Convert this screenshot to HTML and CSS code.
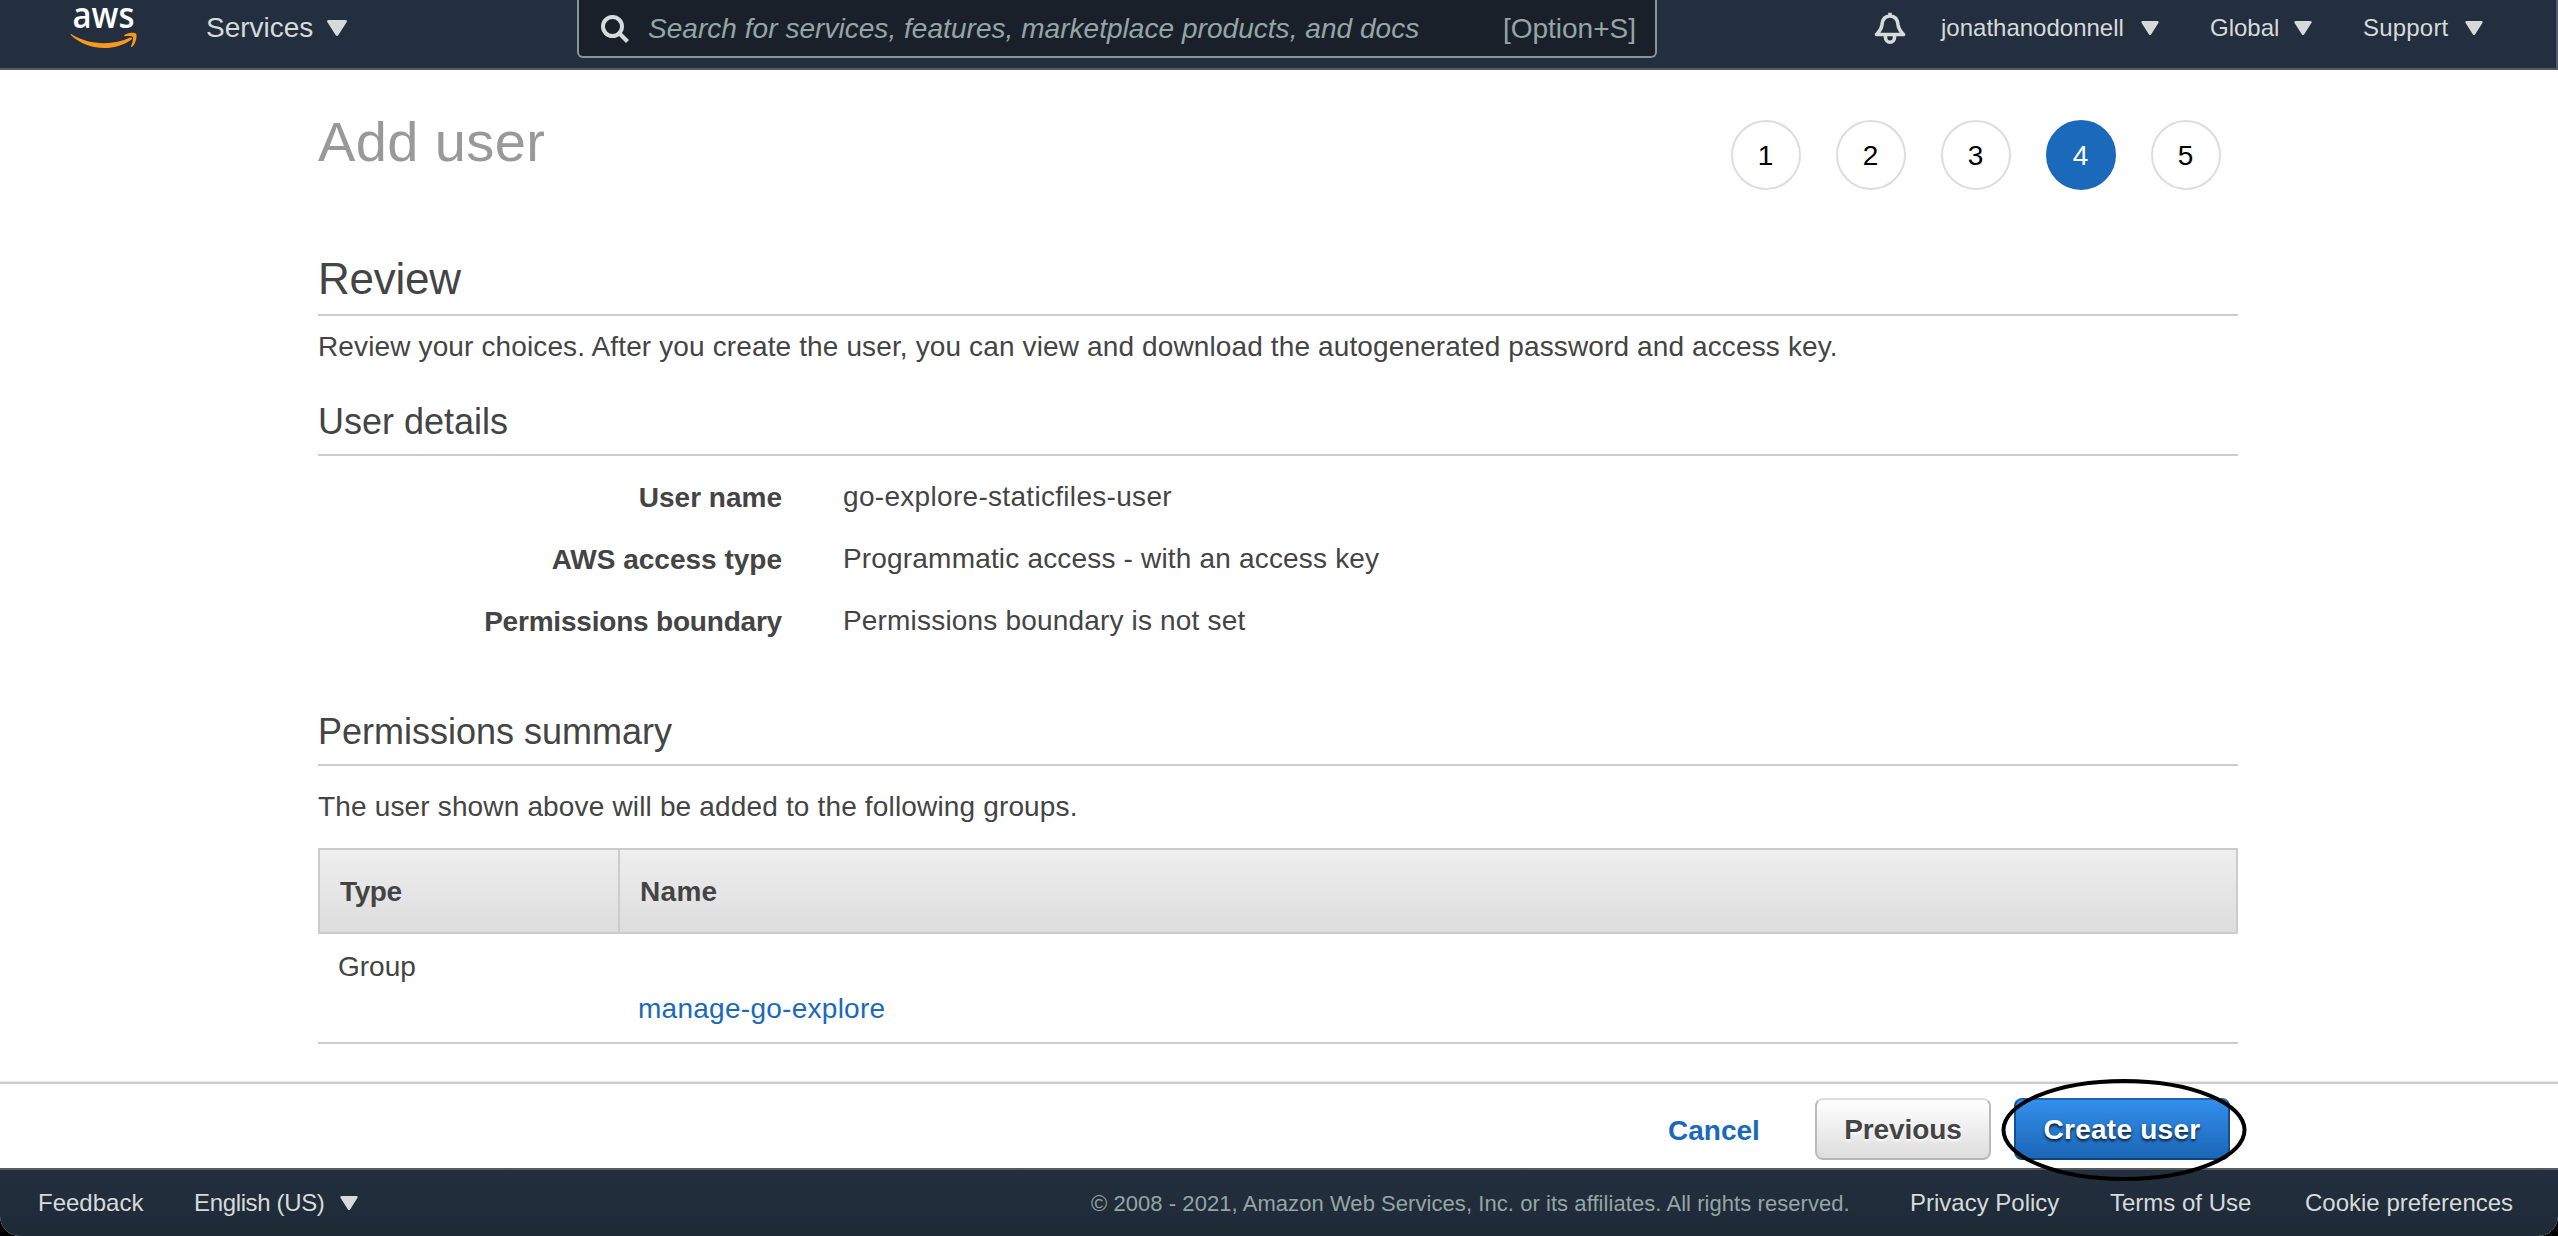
FILE: index.html
```html
<!DOCTYPE html>
<html lang="en">
<head>
<meta charset="utf-8">
<title>Add user</title>
<link rel="stylesheet" href="styles.css">
</head>
<body>
<header class="topbar">
  <svg class="logo" viewBox="0 0 70 44" role="img" aria-label="aws">
    <text class="logo-text" x="2.5" y="22" textLength="62" lengthAdjust="spacingAndGlyphs">aws</text>
    <path class="smile" d="M1.2 28C18 38.8 42 40.200 60.200 31.600C62 31 62.800 32.500 61.200 33.700C43 46.600 17 44 1 29.200C.3 28.400.6 27.600 1.200 28z"/>
    <path class="smile" d="M54.500 29C58.500 26.300 64.500 26.400 66.100 27.700C67.400 29.300 66 37.500 62.200 40.800C61.400 41.400 60.800 41 61.100 40.200C62.200 37.200 63.700 32 62.800 30.800C61.800 29.700 57.500 29.900 55 30.200C54 30.300 53.800 29.500 54.500 29z"/>
  </svg>
  <a class="services">Services<svg class="caret caret-lg" viewBox="0 0 20 16"><path d="M2 0H18Q21 0 19.400 2.500L11.400 15Q10 17 8.600 15L.6 2.500Q-1 0 2 0z"/></svg></a>
  <div class="search">
    <svg class="magnifier" viewBox="0 0 28 28"><circle cx="11.500" cy="11.500" r="9.500"/><path d="M18.500 18.500L26.500 26.500"/></svg>
    <span class="placeholder">Search for services, features, marketplace products, and docs</span>
    <span class="shortcut">[Option+S]</span>
  </div>
  <nav class="account">
    <svg class="bell" viewBox="0 0 32 32"><path d="M16 .8V4M2.500 22.500C6.500 18.500 7.500 16.500 8 12.500C8.600 6.500 11.500 4 16 4S23.400 6.500 24 12.500C24.500 16.500 25.500 18.500 29.500 22.500z"/><path d="M11.500 22.500V25.500A4.500 4.700 0 0 0 20.500 25.500V22.500"/></svg>
    <a class="menu menu-user">jonathanodonnell<svg class="caret" viewBox="0 0 20 16"><path d="M2 0H18Q21 0 19.400 2.500L11.400 15Q10 17 8.600 15L.6 2.500Q-1 0 2 0z"/></svg></a>
    <a class="menu menu-region">Global<svg class="caret" viewBox="0 0 20 16"><path d="M2 0H18Q21 0 19.400 2.500L11.400 15Q10 17 8.600 15L.6 2.500Q-1 0 2 0z"/></svg></a>
    <a class="menu menu-support">Support<svg class="caret" viewBox="0 0 20 16"><path d="M2 0H18Q21 0 19.400 2.500L11.400 15Q10 17 8.600 15L.6 2.500Q-1 0 2 0z"/></svg></a>
  </nav>
</header>
<main class="content">
  <div class="title-row">
    <h1 class="title">Add user</h1>
    <ol class="steps">
      <li class="step">1</li><li class="step">2</li><li class="step">3</li><li class="step step-active">4</li><li class="step">5</li>
    </ol>
  </div>
  <h2 class="review">Review</h2>
  <p class="intro">Review your choices. After you create the user, you can view and download the autogenerated password and access key.</p>
  <h3 class="section">User details</h3>
  <dl class="details">
    <dt>User name</dt><dd class="username">go-explore-staticfiles-user</dd>
    <dt>AWS access type</dt><dd>Programmatic access - with an access key</dd>
    <dt class="boundary">Permissions boundary</dt><dd>Permissions boundary is not set</dd>
  </dl>
  <h3 class="section">Permissions summary</h3>
  <p class="summary">The user shown above will be added to the following groups.</p>
  <div class="table">
    <div class="row head"><div class="cell type">Type</div><div class="cell">Name</div></div>
    <div class="row body"><div class="cell">Group</div><div class="cell cell-link"><a>manage-go-explore</a></div></div>
  </div>
</main>
<div class="actions">
  <a class="cancel">Cancel</a>
  <button class="btn btn-plain">Previous</button>
  <div class="primary-wrap">
    <button class="btn btn-primary">Create user</button>
    <svg class="ring" viewBox="0 0 246 104"><ellipse cx="123" cy="52" rx="120.500" ry="49"/></svg>
  </div>
</div>
<footer class="footer">
  <a class="feedback">Feedback</a>
  <a class="language"><span class="language-name">English (US)</span><svg class="caret" viewBox="0 0 20 16"><path d="M2 0H18Q21 0 19.400 2.500L11.400 15Q10 17 8.600 15L.6 2.500Q-1 0 2 0z"/></svg></a>
  <span class="copyright">© 2008 - 2021, Amazon Web Services, Inc. or its affiliates. All rights reserved.</span>
  <a class="privacy">Privacy Policy</a>
  <a class="terms">Terms of Use</a>
  <a class="cookies">Cookie preferences</a>
</footer>
</body>
</html>
```
FILE: styles.css
```css
* { box-sizing: border-box; }
html { background: #000; }
body {
  margin: 0;
  width: 2558px;
  height: 1236px;
  display: flex;
  flex-direction: column;
  overflow: hidden;
  background: #fff;
  border-radius: 0 0 20px 20px;
  font: 28px/40px "Liberation Sans", Arial, sans-serif;
  color: #444;
}
h1, h2, h3, p, ol, dl, dd { margin: 0; padding: 0; font-weight: normal; }
svg { display: block; flex: none; }
a { color: #1b69ba; }

.topbar {
  height: 70px;
  flex: none;
  display: flex;
  align-items: flex-start;
  padding-left: 70px;
  background: #232f3e;
  border-bottom: 2px solid #545b64;
  border-right: 2px solid #545b64;
  color: #d5dbdb;
}
.topbar a, .footer a { color: #d5dbdb; }
.logo { width: 70px; height: 44px; margin: 6px 66px 0 0; overflow: visible; }
.logo-text { font: 600 36px "Open Sans", sans-serif; fill: #fff; }
.smile { fill: #f8991d; }
.services { display: flex; align-items: center; gap: 14px; width: 371px; margin-top: 8px; }
.caret { width: 18px; height: 14px; fill: #d5dbdb; }
.caret-lg { width: 20px; height: 16px; }
.search {
  width: 1080px;
  height: 58px;
  display: flex;
  align-items: flex-start;
  padding: 9px 19px 0 22px;
  background: #1a2029;
  border: 2px solid #879596;
  border-top: 0;
  border-radius: 0 0 6px 6px;
  color: #95a5a6;
}
.magnifier { width: 28px; height: 28px; margin: 6px 19px 0 0; fill: none; stroke: #d5dbdb; stroke-width: 4; }
.placeholder { flex: 1; font-style: italic; letter-spacing: .04px; white-space: nowrap; }
.account { display: flex; margin-left: 217px; font-size: 24px; }
.bell { width: 32px; height: 32px; margin: 12px 35px 0 0; fill: none; stroke: #d5dbdb; stroke-width: 3.6; stroke-linejoin: round; }
.menu { display: flex; align-items: center; gap: 17px; height: 56px; }
.menu-user { width: 269px; }
.menu-region { width: 153px; gap: 15px; }
.menu-support { letter-spacing: .2px; }

.content { width: 1920px; height: 1012px; flex: none; margin-left: 318px; }
.title-row { display: flex; justify-content: space-between; height: 156px; padding: 36px 17px 0 0; }
.title { font-size: 56px; line-height: 72px; letter-spacing: .4px; color: #999; }
.steps { display: flex; gap: 35px; list-style: none; padding-top: 14px; }
.step { width: 70px; height: 70px; padding-right: 1px; border: 2px solid #ddd; border-radius: 50%; line-height: 68px; text-align: center; color: #000; }
.step-active { background: #1b69ba; border-color: #1b69ba; color: #fff; }
.review { font-size: 44px; line-height: 60px; height: 90px; padding-top: 23px; letter-spacing: -.25px; border-bottom: 2px solid #ccc; }
.intro { height: 70px; padding-top: 11px; letter-spacing: .13px; }
.section { font-size: 36px; line-height: 48px; height: 70px; padding-top: 12px; border-bottom: 2px solid #ccc; }
.details { display: grid; grid-template-columns: 464px 1fr; column-gap: 61px; grid-auto-rows: 62px; height: 240px; padding-top: 21px; letter-spacing: .18px; }
.details dt { font-weight: bold; text-align: right; padding-top: 1px; letter-spacing: 0; }
.details .boundary { letter-spacing: -.2px; }
.details .username { letter-spacing: .31px; }
.summary { height: 82px; padding-top: 21px; letter-spacing: .16px; }
.row { display: grid; grid-template-columns: 300px 1fr; border-bottom: 2px solid #ccc; }
.head { height: 86px; grid-template-columns: 298px 1fr; border: 2px solid #ccc; background: linear-gradient(#eee, #ddd); font-weight: bold; }
.head .cell { padding: 22px 0 0 20px; }
.head .type { letter-spacing: -.4px; }
.head .cell + .cell { border-left: 2px solid #ccc; letter-spacing: .3px; }
.body { height: 110px; }
.body .cell { padding: 13px 0 0 20px; }
.body .cell-link { padding-top: 55px; letter-spacing: .27px; }

.actions { height: 86px; flex: none; display: flex; border-top: 2px solid #ccc; box-shadow: 0 -1px 1px rgba(0,0,0,.08); padding: 14px 0 0 1668px; font-weight: bold; }
.cancel { width: 147px; padding-top: 13px; }
.btn { width: 176px; height: 62px; padding: 2px 0 0; border: 2px solid; border-radius: 8px; font: inherit; white-space: nowrap; }
.btn-plain { color: #444; border-color: #ddd #bbb #b7b7b7; background: linear-gradient(#fff, #ddd); text-shadow: 0 2px 2px #fff; letter-spacing: -.1px; }
.primary-wrap { position: relative; margin-left: 23px; }
.btn-primary { width: 216px; color: #fff; border-color: #1b62b0 #174f8e #12427a; background: linear-gradient(#338fec, #1b66b6); text-shadow: 0 2px 3px rgba(0,0,0,.8); letter-spacing: .25px; }
.ring { position: absolute; left: -13px; top: -20px; width: 246px; height: 104px; fill: none; stroke: #000; stroke-width: 4; }

.footer { height: 68px; flex: none; display: flex; align-items: flex-start; padding: 12px 0 0 38px; background: linear-gradient(#232f3e, #1f2a37); border-top: 2px solid #545b64; font-size: 24px; line-height: 42px; white-space: nowrap; }
.feedback { width: 156px; }
.language { display: flex; align-items: center; gap: 15px; width: 897px; }
.language-name { letter-spacing: -.35px; }
.copyright { width: 819px; font-size: 22px; line-height: 44px; letter-spacing: .06px; color: #95a5a6; }
.privacy { width: 200px; }
.terms { width: 195px; }
```
